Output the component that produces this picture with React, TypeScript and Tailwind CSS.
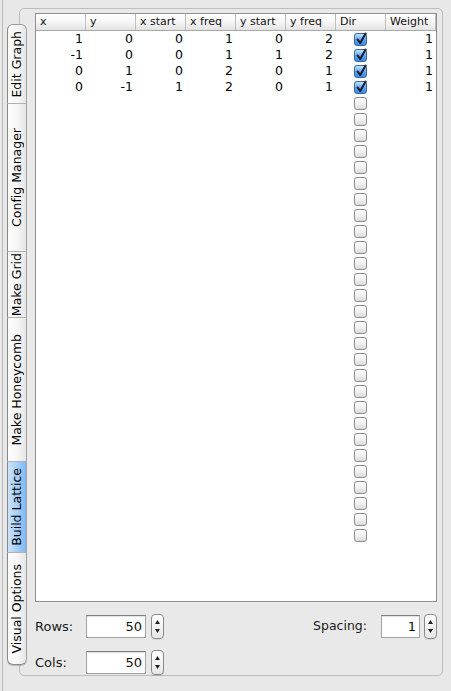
import React from "react";

type Row = [string, string, string, string, string, string, boolean, string];

const data: Row[] = [
  ["1", "0", "0", "1", "0", "2", true, "1"],
  ["-1", "0", "0", "1", "1", "2", true, "1"],
  ["0", "1", "0", "2", "0", "1", true, "1"],
  ["0", "-1", "1", "2", "0", "1", true, "1"],
];

const allRows: (Row | null)[] = [...data, ...Array.from({ length: 28 }, () => null)];

const headers = ["x", "y", "x start", "x freq", "y start", "y freq", "Dir", "Weight"];

const tabs: { label: string; h: string; active?: boolean; first?: boolean; last?: boolean }[] = [
  { label: "Edit Graph", h: "h-[80px]", first: true },
  { label: "Config Manager", h: "h-[148px]" },
  { label: "Make Grid", h: "h-[66px]" },
  { label: "Make Honeycomb", h: "h-[144px]" },
  { label: "Build Lattice", h: "h-[91px]", active: true },
  { label: "Visual Options", h: "h-[112px]", last: true },
];

function CheckBox({ checked }: { checked: boolean }) {
  if (checked) {
    return (
      <div className="relative w-[13px] h-[13px] rounded-[3px] border border-[#3a64a0] bg-linear-to-b from-[#c8e3fd] via-[#5fa7f2] to-[#3d8be8]">
        <svg
          className="absolute left-[0px] top-[-2px]"
          width="13"
          height="14"
          viewBox="0 0 13 14"
        >
          <path d="M2.6 7.6 L5.3 11 L10.6 1.6" fill="none" stroke="#16202e" strokeWidth="2.1" strokeLinecap="round" strokeLinejoin="round" />
        </svg>
      </div>
    );
  }
  return (
    <div className="w-[13px] h-[13px] rounded-[3px] border border-[#8d8d8d] bg-linear-to-b from-white via-[#f1f1f1] to-[#dcdcdc]" />
  );
}

function Stepper() {
  return (
    <div className="w-[13px] h-[25px] rounded-[4px] border border-[#8a8a8a] bg-linear-to-b from-white to-[#e6e6e6] flex flex-col items-center justify-between py-[5px] shadow-[0_1px_0_rgba(0,0,0,0.08)]">
      <svg width="5" height="4" viewBox="0 0 5 4">
        <polygon points="2.5,0 5,4 0,4" fill="#222" />
      </svg>
      <svg width="5" height="4" viewBox="0 0 5 4">
        <polygon points="0,0 5,0 2.5,4" fill="#222" />
      </svg>
    </div>
  );
}

function NumInput({ value, w }: { value: string; w: string }) {
  return (
    <div
      className={`${w} h-[23px] bg-white border border-[#a3a3a3] border-t-[#7c7c7c] shadow-[inset_0_1px_1px_rgba(0,0,0,0.12)] text-right pr-[3px] text-[13px] leading-[21px] text-[#111]`}
    >
      {value}
    </div>
  );
}

export default function App() {
  return (
    <div className="w-[451px] h-[691px] bg-[#e8e8e8] flex overflow-hidden [font-family:'Lucida_Grande','DejaVu_Sans',sans-serif] [font-variant-ligatures:none] text-black">
      <div className="ml-[2px] border-l border-[#b9b9b9] flex-1 flex items-start">
        {/* vertical tabs */}
        <div className="relative z-10 ml-[4px] mt-[24px] w-[20px] flex flex-col shrink-0">
          {tabs.map((t) => (
            <div
              key={t.label}
              className={`${t.h} w-[20px] flex items-center justify-center border-l border-r border-l-[#8a8a8a] border-r-[#a4a4a4] ${
                t.last ? "border-b border-b-[#8a8a8a] shadow-[0_1px_1px_rgba(0,0,0,0.2)]" : "border-b border-b-[#b0b0b0]"
              } ${t.first ? "rounded-t-[6px] border-t border-t-[#9a9a9a]" : ""} ${t.last ? "rounded-b-[6px]" : ""} ${
                t.active
                  ? "bg-linear-to-r from-[#c9e3fc] via-[#a6cff8] to-[#7fb8f1]"
                  : "bg-linear-to-r from-[#fdfdfd] via-[#f7f7f7] to-[#e6e6e6]"
              }`}
            >
              <span className="[writing-mode:vertical-rl] rotate-180 text-[12.5px] leading-[14px] whitespace-nowrap">
                {t.label}
              </span>
            </div>
          ))}
        </div>

        {/* tab pane frame */}
        <div className="-ml-[8px] mt-[8px] w-[424px] h-[668px] shrink-0 border border-[#bdbdbd] rounded-[5px] bg-[#e9e9e9] pt-[4px] pl-[15px] pr-[5px] flex flex-col">
          {/* table */}
          <div className="w-[402px] h-[591px] bg-white border border-[#8f8f8f] flex flex-col overflow-hidden">
            <div className="flex h-[17px] shrink-0 border-b border-[#a9a9a9] bg-linear-to-b from-white via-[#f6f6f6] to-[#e3e3e3]">
              {headers.map((h, i) => (
                <div
                  key={h}
                  className={`${i === 7 ? "flex-1" : "w-[50px]"} border-r border-[#bdbdbd] pl-[4px] text-[11px] leading-[16px] text-[#111]`}
                >
                  {h}
                </div>
              ))}
            </div>
            {allRows.map((r, ri) => (
              <div key={ri} className="flex h-[16px] shrink-0 items-center text-[12.5px] leading-[16px]">
                {[0, 1, 2, 3, 4, 5].map((ci) => (
                  <div key={ci} className="w-[50px] text-right pr-[3px]">
                    {r ? (r[ci] as string) : ""}
                  </div>
                ))}
                <div className="w-[50px] flex justify-center pr-[1px]">
                  <CheckBox checked={r ? (r[6] as boolean) : false} />
                </div>
                <div className="flex-1 text-right pr-[3px]">{r ? (r[7] as string) : ""}</div>
              </div>
            ))}
          </div>

          {/* controls */}
          <div className="mt-[12px] h-[25px] flex items-center">
            <div className="w-[51px] text-[13px] text-[#1a1a1a]">Rows:</div>
            <NumInput value="50" w="w-[60px]" />
            <div className="ml-[5px]">
              <Stepper />
            </div>
            <div className="flex-1" />
            <div className="text-[12.5px] text-[#1a1a1a]">Spacing:</div>
            <div className="ml-[14px]">
              <NumInput value="1" w="w-[39px]" />
            </div>
            <div className="ml-[4px]">
              <Stepper />
            </div>
          </div>
          <div className="mt-[11px] h-[25px] flex items-center">
            <div className="w-[51px] text-[13px] text-[#1a1a1a]">Cols:</div>
            <NumInput value="50" w="w-[60px]" />
            <div className="ml-[5px]">
              <Stepper />
            </div>
          </div>
        </div>
      </div>
    </div>
  );
}
